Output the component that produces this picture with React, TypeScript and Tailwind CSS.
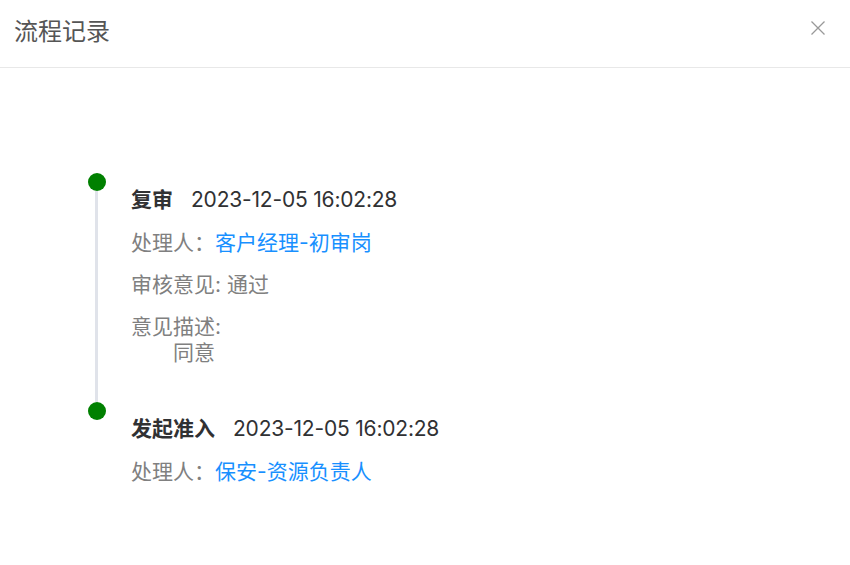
import React from "react";

type Step = {
  name: string;
  time: string;
  handler: string;
  opinion?: string;
  desc?: string;
};

const steps: Step[] = [
  {
    name: "复审",
    time: "2023-12-05 16:02:28",
    handler: "客户经理-初审岗",
    opinion: "通过",
    desc: "同意",
  },
  {
    name: "发起准入",
    time: "2023-12-05 16:02:28",
    handler: "保安-资源负责人",
  },
];

const App: React.FC = () => {
  return (
    <div
      className="w-[850px] h-[565px] bg-white overflow-hidden"
      style={{ fontFamily: '"Inter", "Noto Sans CJK SC", sans-serif' }}
    >
      <div className="h-[68px] border-b border-[#e8e8e8] flex items-center justify-between pl-[14px] pr-[24px] pb-[4px]">
        <span className="text-[24px] leading-[32px] text-[#555555]">流程记录</span>
        <svg width="16" height="16" viewBox="0 0 16 16" className="text-[#999999] -mt-[7px]">
          <path d="M1.5 1.5 L14.5 14.5 M14.5 1.5 L1.5 14.5" stroke="currentColor" strokeWidth="1.3" fill="none" />
        </svg>
      </div>

      <div className="pl-[88px] pt-[105px]">
        {steps.map((s, i) => (
          <div key={i} className="flex">
            <div className="w-[18px] flex flex-col items-center shrink-0">
              <div className="w-[18px] h-[18px] rounded-full bg-[#008000] shrink-0" />
              {i < steps.length - 1 && <div className="w-[3px] flex-1 bg-[#e0e3ea] -ml-[2px]" />}
            </div>
            <div className="pl-[25px] pt-[14px] pb-[36px] text-[21px] leading-[26px]">
              <div className="text-[#303133]">
                <span className="font-bold">{s.name}</span>
                <span className="ml-[18px] tracking-[-0.2px]">{s.time}</span>
              </div>
              <div className="mt-[17px] text-[#808080]">
                处理人：<span className="text-[#1890ff]">{s.handler}</span>
              </div>
              {s.opinion && (
                <div className="mt-[16px] text-[#808080]">审核意见: {s.opinion}</div>
              )}
              {s.desc && (
                <div className="mt-[16px] text-[#808080]">
                  <div>意见描述:</div>
                  <div className="pl-[42px]">{s.desc}</div>
                </div>
              )}
            </div>
          </div>
        ))}
      </div>
    </div>
  );
};

export default App;
